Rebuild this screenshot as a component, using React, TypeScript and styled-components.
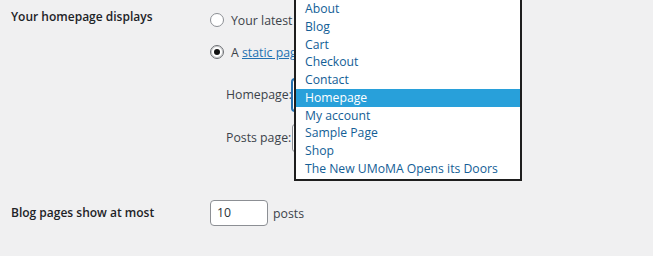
import React from "react";
import styled, { createGlobalStyle } from "styled-components";

const GlobalStyle = createGlobalStyle`
  html, body {
    margin: 0;
    padding: 0;
    background: #f0f0f1;
    overflow: hidden;
  }
  body {
    font-family: "Open Sans", "Noto Sans", sans-serif;
    font-size: 12.3px;
    color: #3c434a;
  }
`;

const Page = styled.div`
  width: 653px;
  height: 256px;
  position: relative;
  overflow: hidden;
`;

const Row = styled.div<{ $pad: string }>`
  display: grid;
  grid-template-columns: 210px 1fr;
  padding: ${({ $pad }) => $pad};
`;

const Label = styled.div<{ $lh: number }>`
  padding-left: 11px;
  font-size: 12px;
  font-weight: 600;
  color: #1d2327;
  line-height: ${({ $lh }) => $lh}px;
  white-space: nowrap;
`;

const Field = styled.div`
  display: flex;
  flex-direction: column;
  padding-top: 3px;
`;

const RadioLine = styled.label<{ $gap: number }>`
  display: flex;
  align-items: center;
  gap: 7px;
  height: 20px;
  width: 84px;
  overflow: hidden;
  margin-bottom: ${({ $gap }) => $gap}px;
  white-space: nowrap;
`;

const Radio = styled.span<{ $checked?: boolean }>`
  width: 12px;
  height: 12px;
  border-radius: 50%;
  border: 1px solid ${({ $checked }) => ($checked ? "#6b6e72" : "#8c8f94")};
  background: #fff;
  display: flex;
  align-items: center;
  justify-content: center;
  flex: none;
  ${({ $checked }) =>
    $checked &&
    `
    box-shadow: inset 0 0 0 1px #c9cacc;
    &::after {
      content: "";
      width: 6px;
      height: 6px;
      border-radius: 50%;
      background: #111;
    }
  `}
`;

const Link = styled.a`
  color: #2271b1;
  text-decoration: underline;
`;

const SubList = styled.div`
  display: flex;
  flex-direction: column;
  gap: 13px;
  padding-left: 16px;
  margin-top: 17px;
`;

const SubRow = styled.div`
  display: flex;
  align-items: center;
  gap: 3px;
`;

const SubLabel = styled.span`
  width: 63px;
  white-space: nowrap;
  line-height: 18px;
`;

const SelectBox = styled.div<{ $focus?: boolean; $h: number }>`
  width: 226px;
  height: ${({ $h }) => $h}px;
  box-sizing: border-box;
  border: 1px solid ${({ $focus }) => ($focus ? "#2271b1" : "#8c8f94")};
  border-radius: 3px;
  background: #fff;
  box-shadow: ${({ $focus }) => ($focus ? "0 0 0 1px #2271b1" : "none")};
`;

const Inline = styled.div`
  display: flex;
  align-items: center;
  gap: 5px;
  color: #3c434a;
`;

const NumberInput = styled.div`
  width: 50px;
  height: 24px;
  border: 1px solid #8c8f94;
  border-radius: 4px;
  background: #fff;
  color: #2c3338;
  padding-left: 6px;
  line-height: 24px;
`;

const Dropdown = styled.ul`
  position: absolute;
  left: 294px;
  top: -4px;
  width: 224px;
  margin: 0;
  padding: 2px 0 1px;
  list-style: none;
  background: #fff;
  border: 2px solid #1e1e1e;
`;

const Option = styled.li<{ $active?: boolean }>`
  height: 17.75px;
  line-height: 17.75px;
  padding-left: 9px;
  font-size: 12.2px;
  white-space: nowrap;
  color: ${({ $active }) => ($active ? "#fff" : "#135e96")};
  background: ${({ $active }) => ($active ? "#28a0da" : "transparent")};
`;

const pages = [
  "About",
  "Blog",
  "Cart",
  "Checkout",
  "Contact",
  "Homepage",
  "My account",
  "Sample Page",
  "Shop",
  "The New UMoMA Opens its Doors",
];

export default function App() {
  return (
    <Page>
      <GlobalStyle />
      <Row $pad="7px 0 0">
        <Label $lh={20}>Your homepage displays</Label>
        <Field>
          <RadioLine $gap={12}>
            <Radio />
            <span>Your latest posts</span>
          </RadioLine>
          <RadioLine $gap={0}>
            <Radio $checked />
            <span>
              A <Link>static page</Link> (select below)
            </span>
          </RadioLine>
          <SubList>
            <SubRow>
              <SubLabel>Homepage:</SubLabel>
              <SelectBox $focus $h={32} />
            </SubRow>
            <SubRow>
              <SubLabel>Posts page:</SubLabel>
              <SelectBox $h={28} />
            </SubRow>
          </SubList>
        </Field>
      </Row>
      <Row $pad="48px 0 0">
        <Label $lh={26}>Blog pages show at most</Label>
        <Inline>
          <NumberInput>10</NumberInput>
          posts
        </Inline>
      </Row>
      <Dropdown>
        {pages.map((p) => (
          <Option key={p} $active={p === "Homepage"}>
            {p}
          </Option>
        ))}
      </Dropdown>
    </Page>
  );
}
